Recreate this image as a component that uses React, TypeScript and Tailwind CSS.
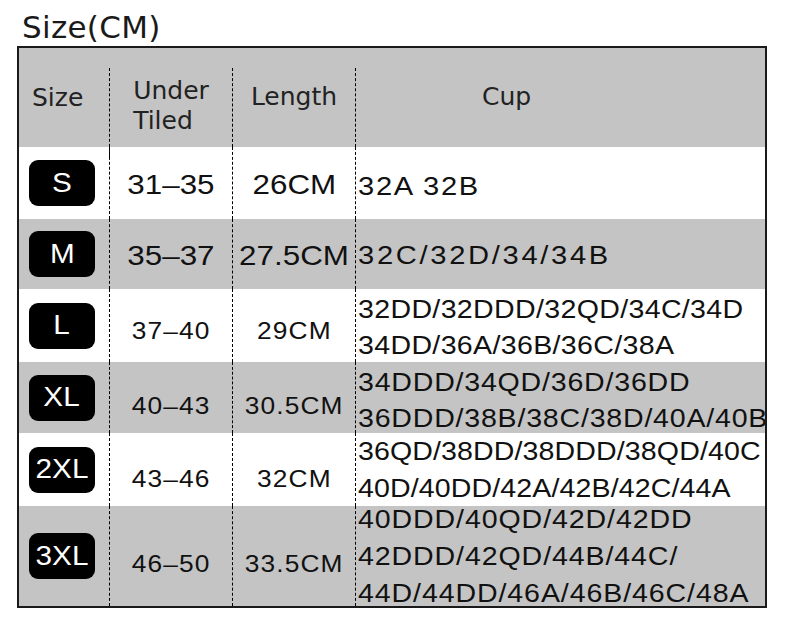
import React from "react";

type Row = {
    size: string;
    under: string;
    length: string;
    cup: string[];
    h: string;
    bg: string;
    mid: string;
    cupCls: string;
};

// the source picture has its glyphs stretched sideways, hence the scale-x
const rows: Row[] = [
    {
        size: "S", under: "31–35", length: "26CM", cup: ["32A 32B"],
        h: "h-[72px]", bg: "bg-white",
        mid: "text-[28px] tracking-[0px] pt-[4px]",
        cupCls: "text-[26px] tracking-[1.5px] pt-[5px] leading-[36px]"
    },
    {
        size: "M", under: "35–37", length: "27.5CM", cup: ["32C/32D/34/34B"],
        h: "h-[70px]", bg: "bg-[#c4c4c4]",
        mid: "text-[28px] tracking-[0px] pt-[4px]",
        cupCls: "text-[26px] tracking-[2.4px] pt-[2px] leading-[36px]"
    },
    {
        size: "L", under: "37–40", length: "29CM",
        cup: ["32DD/32DDD/32QD/34C/34D", "34DD/36A/36B/36C/38A"],
        h: "h-[73px]", bg: "bg-white",
        mid: "text-[23.5px] tracking-[1px] pt-[12px]",
        cupCls: "text-[25.5px] tracking-[0.3px] pt-[3px] leading-[36px]"
    },
    {
        size: "XL", under: "40–43", length: "30.5CM",
        cup: ["34DDD/34QD/36D/36DD", "36DDD/38B/38C/38D/40A/40B"],
        h: "h-[71px]", bg: "bg-[#c4c4c4]",
        mid: "text-[23.5px] tracking-[1px] pt-[18px]",
        cupCls: "text-[25.5px] tracking-[0.7px] pt-[5px] leading-[36px]"
    },
    {
        size: "2XL", under: "43–46", length: "32CM",
        cup: ["36QD/38DD/38DDD/38QD/40C", "40D/40DD/42A/42B/42C/44A"],
        h: "h-[73px]", bg: "bg-white",
        mid: "text-[23.5px] tracking-[1px] pt-[20px]",
        cupCls: "text-[25.5px] tracking-[0.1px] pt-0 leading-[37px]"
    },
    {
        size: "3XL", under: "46–50", length: "33.5CM",
        cup: ["40DDD/40QD/42D/42DD", "42DDD/42QD/44B/44C/", "44D/44DD/46A/46B/46C/48A"],
        h: "h-[100px]", bg: "bg-[#c4c4c4]",
        mid: "text-[23.5px] tracking-[1px] pt-[18px]",
        cupCls: "text-[25.5px] tracking-[0.8px] pt-0 leading-[37px]"
    }
];

const dash = "border-l border-dashed border-black";

export default function App() {
    return (
        <div className="w-[785px] h-[626px] bg-white pl-[17px] overflow-hidden">
            <div className="pt-[12px] pl-[5px] h-[46px] text-[31px] leading-[30px] tracking-[0.3px] font-['DejaVu_Sans',sans-serif] text-[#1a1a1a]">
                Size(CM)
            </div>
            <div className="w-[750px] border-2 border-[#1a1a1a] overflow-hidden">
                {/* header */}
                <div className="flex h-[99px] bg-[#c4c4c4] text-[25px] leading-[30px] text-[#222] font-['DejaVu_Sans',sans-serif]">
                    <div className="w-[90px] flex items-center pl-[13px]">Size</div>
                    <div className="w-[123px] flex flex-col">
                        <div className={`mt-[20px] flex-1 ${dash} flex items-center justify-center pb-[21px]`}>
                            <div className="mt-[8px] text-left">
                                <div>Under</div>
                                <div>Tiled</div>
                            </div>
                        </div>
                    </div>
                    <div className="w-[123px] flex flex-col">
                        <div className={`mt-[20px] flex-1 ${dash} flex items-center justify-center pb-[21px]`}>
                            Length
                        </div>
                    </div>
                    <div className="w-[410px] flex flex-col">
                        <div className={`mt-[20px] flex-1 ${dash} flex items-center pl-[126px] pb-[21px]`}>
                            Cup
                        </div>
                    </div>
                </div>

                {rows.map((r) => (
                    <div key={r.size} className={`flex ${r.h} ${r.bg} text-[#111] font-['Liberation_Sans',Arial,sans-serif]`}>
                        <div className="w-[90px] flex items-center pl-[10px]">
                            <div className="w-[66px] h-[46px] rounded-[9px] bg-black text-white text-[27px] flex items-center justify-center">
                                <span className="scale-x-[1.1]">{r.size}</span>
                            </div>
                        </div>
                        <div className={`w-[123px] ${dash} flex items-center justify-center whitespace-nowrap ${r.mid}`}>
                            <span className="scale-x-[1.12]">{r.under}</span>
                        </div>
                        <div className={`w-[123px] ${dash} flex items-center justify-center whitespace-nowrap ${r.mid}`}>
                            <span className="scale-x-[1.12]">{r.length}</span>
                        </div>
                        <div className={`w-[410px] ${dash} flex items-center pl-[2px] whitespace-nowrap ${r.cupCls}`}>
                            <div className="scale-x-[1.12] origin-left">
                                {r.cup.map((line) => (
                                    <div key={line}>{line}</div>
                                ))}
                            </div>
                        </div>
                    </div>
                ))}
            </div>
        </div>
    );
}
